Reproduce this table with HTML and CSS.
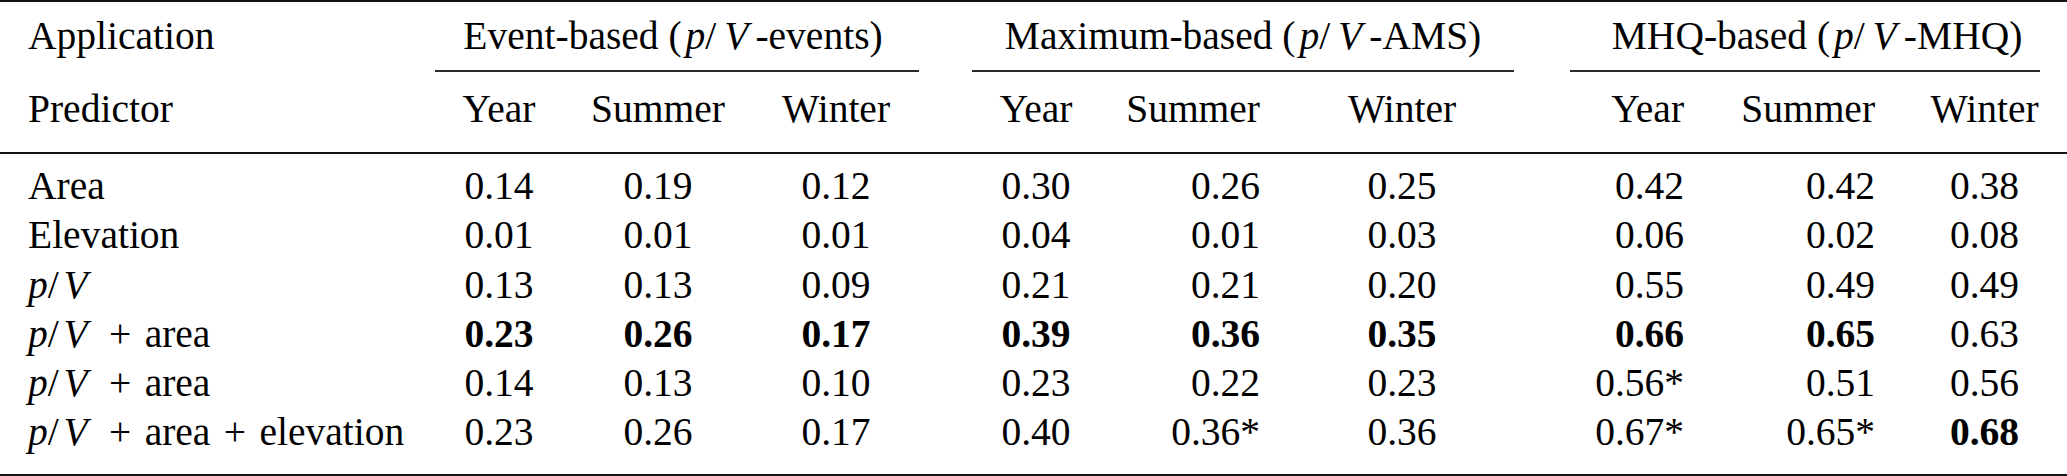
FILE: index.html
```html
<!DOCTYPE html>
<html>
<head>
<meta charset="utf-8">
<link rel="stylesheet" href="styles.css">
</head>
<body>
<table class="tbl">
  <colgroup>
    <col class="w-pred">
    <col class="w-c1"><col class="w-c2"><col class="w-c3">
    <col class="w-gap1">
    <col class="w-c4"><col class="w-c5"><col class="w-c6">
    <col class="w-gap2">
    <col class="w-c7"><col class="w-c8"><col class="w-c9">
  </colgroup>
  <thead>
    <tr class="r-group">
      <th class="pred">Application</th>
      <th colspan="3" class="grp"><div class="grp-in grp-first">Event-based (<i class="p">p</i>/<i class="v">V</i>-events)</div></th>
      <th class="gap"></th>
      <th colspan="3" class="grp"><div class="grp-in">Maximum-based (<i class="p">p</i>/<i class="v">V</i>-AMS)</div></th>
      <th class="gap"></th>
      <th colspan="3" class="grp"><div class="grp-in grp-last">MHQ-based (<i class="p">p</i>/<i class="v">V</i>-MHQ)</div></th>
    </tr>
    <tr class="r-sub">
      <th class="pred">Predictor</th>
      <th class="c1">Year</th><th class="c2">Summer</th><th class="c3">Winter</th>
      <th class="gap"></th>
      <th class="c4">Year</th><th class="c5">Summer</th><th class="c6">Winter</th>
      <th class="gap"></th>
      <th class="c7">Year</th><th class="c8">Summer</th><th class="c9">Winter</th>
    </tr>
  </thead>
  <tbody>
    <tr>
      <td class="pred">Area</td>
      <td class="c1">0.14</td><td class="c2">0.19</td><td class="c3">0.12</td>
      <td class="gap"></td>
      <td class="c4">0.30</td><td class="c5">0.26</td><td class="c6">0.25</td>
      <td class="gap"></td>
      <td class="c7">0.42</td><td class="c8">0.42</td><td class="c9">0.38</td>
    </tr>
    <tr>
      <td class="pred">Elevation</td>
      <td class="c1">0.01</td><td class="c2">0.01</td><td class="c3">0.01</td>
      <td class="gap"></td>
      <td class="c4">0.04</td><td class="c5">0.01</td><td class="c6">0.03</td>
      <td class="gap"></td>
      <td class="c7">0.06</td><td class="c8">0.02</td><td class="c9">0.08</td>
    </tr>
    <tr>
      <td class="pred"><i>p</i>/<i class="v">V</i></td>
      <td class="c1">0.13</td><td class="c2">0.13</td><td class="c3">0.09</td>
      <td class="gap"></td>
      <td class="c4">0.21</td><td class="c5">0.21</td><td class="c6">0.20</td>
      <td class="gap"></td>
      <td class="c7">0.55</td><td class="c8">0.49</td><td class="c9">0.49</td>
    </tr>
    <tr>
      <td class="pred"><i>p</i>/<i class="v vb">V</i><span class="op">+</span>area</td>
      <td class="c1"><b>0.23</b></td><td class="c2"><b>0.26</b></td><td class="c3"><b>0.17</b></td>
      <td class="gap"></td>
      <td class="c4"><b>0.39</b></td><td class="c5"><b>0.36</b></td><td class="c6"><b>0.35</b></td>
      <td class="gap"></td>
      <td class="c7"><b>0.66</b></td><td class="c8"><b>0.65</b></td><td class="c9">0.63</td>
    </tr>
    <tr>
      <td class="pred"><i>p</i>/<i class="v vb">V</i><span class="op">+</span>area</td>
      <td class="c1">0.14</td><td class="c2">0.13</td><td class="c3">0.10</td>
      <td class="gap"></td>
      <td class="c4">0.23</td><td class="c5">0.22</td><td class="c6">0.23</td>
      <td class="gap"></td>
      <td class="c7">0.56*</td><td class="c8">0.51</td><td class="c9">0.56</td>
    </tr>
    <tr>
      <td class="pred"><i>p</i>/<i class="v vb">V</i><span class="op">+</span>area<span class="op">+</span>elevation</td>
      <td class="c1">0.23</td><td class="c2">0.26</td><td class="c3">0.17</td>
      <td class="gap"></td>
      <td class="c4">0.40</td><td class="c5">0.36*</td><td class="c6">0.36</td>
      <td class="gap"></td>
      <td class="c7">0.67*</td><td class="c8">0.65*</td><td class="c9"><b>0.68</b></td>
    </tr>
  </tbody>
</table>
</body>
</html>
```
FILE: styles.css
```css
html, body {
  margin: 0;
  padding: 0;
  background: #ffffff;
}

body {
  width: 2067px;
  height: 476px;
  overflow: hidden;
  font-family: "Liberation Serif", "Times New Roman", serif;
  font-size: 39.5px;
  color: #000;
}

.tbl {
  table-layout: fixed;
  width: 2067px;
  border-collapse: separate;
  border-spacing: 0;
  border-top: 2px solid #111;
}

.w-pred { width: 435px; }
.w-c1 { width: 128px; }
.w-c2 { width: 190px; }
.w-c3 { width: 166px; }
.w-gap1 { width: 53px; }
.w-c4 { width: 128px; }
.w-c5 { width: 200px; }
.w-c6 { width: 214px; }
.w-gap2 { width: 56px; }
.w-c7 { width: 130px; }
.w-c8 { width: 190px; }
.w-c9 { width: 177px; }

th, td {
  padding: 0;
  font-weight: normal;
  line-height: 49.2px;
  vertical-align: top;
  white-space: nowrap;
}

.pred {
  text-align: left;
  padding-left: 28px;
}

i { font-style: italic; }
i.v { margin-left: 0.12em; }
i.vb { margin-right: 0.2em; }
b { font-weight: bold; }

.op { padding: 0 0.34em; }

/* header row 1 */
.r-group th {
  padding-top: 10px;
  line-height: 49px;
}
.r-group th.grp { text-align: center; }
.grp-in {
  padding-bottom: 9px;
  border-bottom: 2px solid #2a2a2a;
}
.grp-in i.p { margin-left: 0.1em; }
.grp-in i.v { margin-left: 0.2em; margin-right: 0.18em; }
.grp-first { padding-right: 8px; }
.grp-last { margin-right: 27px; padding-left: 24px; }

/* header row 2 */
.r-sub th {
  padding-top: 13.3px;
  padding-bottom: 17.7px;
  line-height: 49px;
  border-bottom: 2px solid #111;
}

/* body */
tbody tr:first-child td { padding-top: 8.2px; }
tbody tr:last-child td {
  padding-bottom: 16.6px;
  border-bottom: 2px solid #111;
}

/* column alignment */
.c1, .c2, .c3, .c4 { text-align: center; }
.c5 { text-align: right; padding-right: 40px; }
.c6 { text-align: center; padding-right: 10px; }
.c7 { text-align: right; padding-right: 16px; }
.c8 { text-align: right; padding-right: 15px; }
.c9 { text-align: center; padding-left: 12px; }
```
